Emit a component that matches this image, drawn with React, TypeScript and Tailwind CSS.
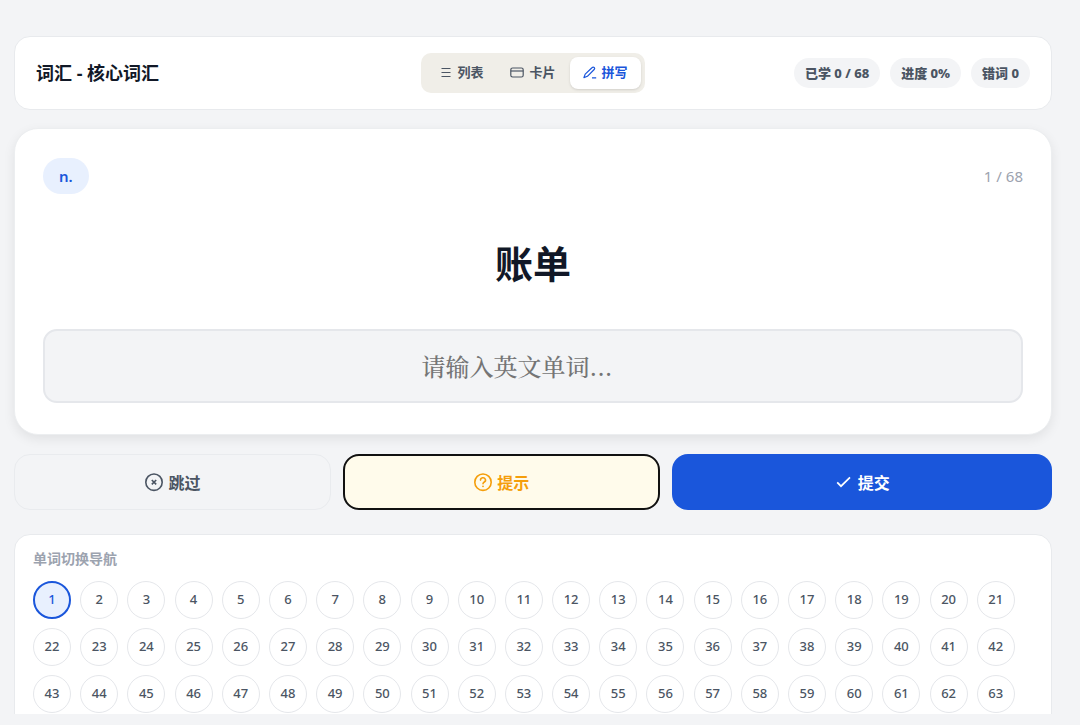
/**
 * Spelling practice page: header with mode tabs, word card, actions, word nav.
 */
import { useState } from "react";
import type { ReactNode } from "react";

const TOTAL = 68;

type Mode = "list" | "card" | "spell";

const MODES: { id: Mode; label: string; icon: ReactNode }[] = [
  { id: "list", label: "列表", icon: <ListIcon /> },
  { id: "card", label: "卡片", icon: <CardIcon /> },
  { id: "spell", label: "拼写", icon: <PenIcon /> },
];

const STATS = [`已学 0 / ${TOTAL}`, "进度 0%", "错词 0"];

export default function App() {
  const [mode, setMode] = useState<Mode>("spell");
  const [current, setCurrent] = useState(1);
  const [answer, setAnswer] = useState("");

  return (
    <div className="h-screen bg-[#f3f4f6] pb-[11px] font-['Noto_Sans','Noto_Sans_CJK_SC',sans-serif]">
      <main className="flex h-full flex-col overflow-y-auto pt-9 pr-7 pl-[14px] [scrollbar-width:none]">
        <header className="grid shrink-0 grid-cols-[1fr_auto_1fr] items-center rounded-2xl border border-[#e8eaed] bg-white px-[21px] py-4">
          <h1 className="text-lg leading-6 font-bold text-[#111827]">词汇 - 核心词汇</h1>
          <div className="flex gap-px rounded-[10px] bg-[#f0eee8] p-1">
            {MODES.map((m) => (
              <button
                key={m.id}
                type="button"
                onClick={() => setMode(m.id)}
                aria-pressed={mode === m.id}
                className={modeClass(mode === m.id)}
              >
                {m.icon}
                {m.label}
              </button>
            ))}
          </div>
          <div className="flex justify-end gap-[10px]">
            {STATS.map((s) => (
              <span
                key={s}
                className="rounded-full bg-[#f3f4f6] px-[11px] py-[5px] text-[13px] leading-5 font-extrabold whitespace-nowrap text-[#4b5563]"
              >
                {s}
              </span>
            ))}
          </div>
        </header>

        <section className="mt-[18px] shrink-0 rounded-3xl border border-[#eceef0] bg-white px-7 pt-[29px] pb-[31px] shadow-[0_4px_12px_rgba(0,0,0,0.08)]">
          <div className="flex items-center justify-between">
            <span className="rounded-full bg-[#e8f0fe] px-4 py-2 text-[15px] leading-5 font-semibold text-[#1a56db]">
              n.
            </span>
            <span className="text-[15px] leading-5 text-[#9ca3af]">
              {current} / {TOTAL}
            </span>
          </div>
          <h2 className="mt-[39px] text-center text-[38px] leading-[60px] font-bold text-[#111827]">账单</h2>
          <input
            type="text"
            value={answer}
            onChange={(e) => setAnswer(e.target.value)}
            placeholder="请输入英文单词..."
            aria-label="请输入英文单词"
            className="mt-9 h-[74px] w-full rounded-[14px] border-2 border-[#e5e7eb] bg-[#f3f4f6] pt-1 pr-12 pl-4 text-center font-['DejaVu_Serif','Noto_Serif_CJK_SC',serif] text-2xl font-medium text-[#111827] outline-none placeholder:text-[#757575]"
          />
        </section>

        <div className="mt-[19px] grid shrink-0 grid-cols-[1fr_1fr_1.2fr] gap-3">
          <button
            type="button"
            className="flex h-14 items-center justify-center gap-1 rounded-2xl border border-[#e9ebee] bg-[#f3f4f6] pt-0.5 text-base font-bold text-[#4b5563]"
          >
            <SkipIcon />
            跳过
          </button>
          <button
            type="button"
            className="flex h-14 items-center justify-center gap-1 rounded-2xl border-2 border-[#111111] bg-[#fffbeb] pt-0.5 text-base font-bold text-[#f59e0b]"
          >
            <HintIcon />
            提示
          </button>
          <button
            type="button"
            className="flex h-14 items-center justify-center gap-1 rounded-2xl bg-[#1a56db] pt-0.5 text-base font-bold text-white"
          >
            <CheckIcon />
            提交
          </button>
        </div>

        <nav
          aria-labelledby="word-nav-title"
          className="mt-6 shrink-0 rounded-2xl border border-[#e8eaed] bg-white pt-[14px] pr-9 pb-5 pl-[18px]"
        >
          <h3 id="word-nav-title" className="text-sm leading-5 font-bold text-[#9ca3af]">
            单词切换导航
          </h3>
          <div className="mt-3 grid grid-cols-[repeat(auto-fill,38px)] justify-between gap-[9px]">
            {Array.from({ length: TOTAL }, (_, i) => i + 1).map((n) => (
              <button
                key={n}
                type="button"
                onClick={() => setCurrent(n)}
                aria-current={n === current}
                className={wordClass(n === current)}
              >
                {n}
              </button>
            ))}
          </div>
        </nav>
      </main>
    </div>
  );
}

function modeClass(active: boolean): string {
  return active
    ? "flex h-8 items-center gap-[5px] rounded-lg bg-white px-[13px] text-[13px] font-bold text-[#1a56db] shadow-sm"
    : "flex h-8 items-center gap-[5px] rounded-lg px-[13px] text-[13px] font-bold text-[#4b5563]";
}

function wordClass(active: boolean): string {
  return active
    ? "size-[38px] rounded-full border-2 border-[#1a56db] bg-[#e8f0fe] text-[13px] font-medium text-[#1a56db]"
    : "size-[38px] rounded-full border border-[#e5e7eb] bg-white text-[13px] font-medium text-[#4b5563]";
}

function ListIcon() {
  return (
    <svg width="14" height="14" viewBox="0 0 14 14" fill="none" stroke="currentColor" strokeWidth="1.2" aria-hidden="true">
      <path d="M3.5 2.5h9M3.5 6.5h9M3.5 10.5h9" />
    </svg>
  );
}

function CardIcon() {
  return (
    <svg width="14" height="14" viewBox="0 0 14 14" fill="none" stroke="currentColor" strokeWidth="1.2" aria-hidden="true">
      <rect x="0.8" y="2" width="12.4" height="9" rx="1.8" />
      <path d="M0.8 5h12.4" />
    </svg>
  );
}

function PenIcon() {
  return (
    <svg width="14" height="14" viewBox="0 0 14 14" fill="none" stroke="currentColor" strokeWidth="1.2" strokeLinejoin="round" aria-hidden="true">
      <path d="M0.9 11.6l1.3-3.5 7-6.6a1.4 1.4 0 0 1 2 2l-6.8 6.8zM9 11.8h4.2" />
    </svg>
  );
}

function SkipIcon() {
  return (
    <svg width="20" height="20" viewBox="0 0 20 20" fill="none" stroke="currentColor" strokeWidth="1.6" aria-hidden="true">
      <circle cx="10" cy="9.2" r="8.2" />
      <path d="M7.8 7l4.4 4.4M12.2 7l-4.4 4.4" />
    </svg>
  );
}

function HintIcon() {
  return (
    <svg width="20" height="20" viewBox="0 0 20 20" fill="none" stroke="currentColor" strokeWidth="1.6" strokeLinecap="round" aria-hidden="true">
      <circle cx="10" cy="9.2" r="8.2" />
      <path d="M7.5 7.1a2.5 2.3 0 1 1 3.8 1.9c-.8.5-1.3.9-1.3 1.8" />
      <circle cx="10" cy="13.3" r="0.9" fill="currentColor" stroke="none" />
    </svg>
  );
}

function CheckIcon() {
  return (
    <svg width="20" height="20" viewBox="0 0 20 20" fill="none" stroke="currentColor" strokeWidth="1.7" aria-hidden="true">
      <path d="M3.2 9.4l3.8 3.8 9-8.8" />
    </svg>
  );
}
